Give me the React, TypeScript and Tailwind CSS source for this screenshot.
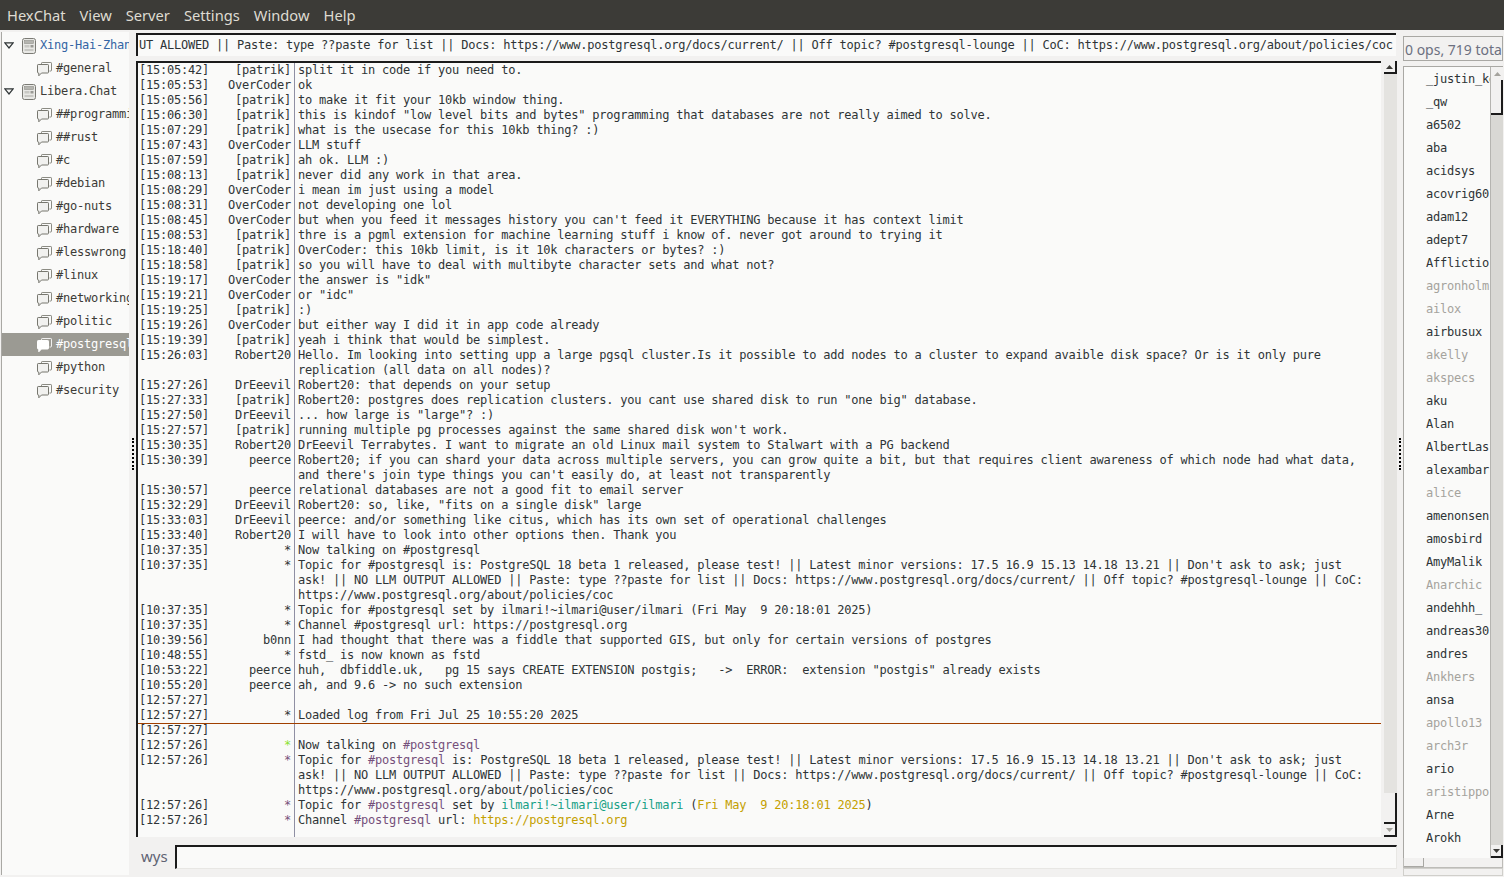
const mono = "font-['DejaVu_Sans_Mono',monospace]";

type Seg = string | [string, string];
type Line = { t: string; n: string; m: Seg[]; nc?: string };

const PURPLE = 'text-[#75507b]';
const TEAL = 'text-[#16a085]';
const GOLD = 'text-[#c4a000]';

const lines: Line[] = [
  { t: '15:05:42', n: '[patrik]', m: ['split it in code if you need to.'] },
  { t: '15:05:53', n: 'OverCoder', m: ['ok'] },
  { t: '15:05:56', n: '[patrik]', m: ['to make it fit your 10kb window thing.'] },
  { t: '15:06:30', n: '[patrik]', m: ['this is kindof "low level bits and bytes" programming that databases are not really aimed to solve.'] },
  { t: '15:07:29', n: '[patrik]', m: ['what is the usecase for this 10kb thing? :)'] },
  { t: '15:07:43', n: 'OverCoder', m: ['LLM stuff'] },
  { t: '15:07:59', n: '[patrik]', m: ['ah ok. LLM :)'] },
  { t: '15:08:13', n: '[patrik]', m: ['never did any work in that area.'] },
  { t: '15:08:29', n: 'OverCoder', m: ['i mean im just using a model'] },
  { t: '15:08:31', n: 'OverCoder', m: ['not developing one lol'] },
  { t: '15:08:45', n: 'OverCoder', m: ["but when you feed it messages history you can't feed it EVERYTHING because it has context limit"] },
  { t: '15:08:53', n: '[patrik]', m: ['thre is a pgml extension for machine learning stuff i know of. never got around to trying it'] },
  { t: '15:18:40', n: '[patrik]', m: ['OverCoder: this 10kb limit, is it 10k characters or bytes? :)'] },
  { t: '15:18:58', n: '[patrik]', m: ['so you will have to deal with multibyte character sets and what not?'] },
  { t: '15:19:17', n: 'OverCoder', m: ['the answer is "idk"'] },
  { t: '15:19:21', n: 'OverCoder', m: ['or "idc"'] },
  { t: '15:19:25', n: '[patrik]', m: [':)'] },
  { t: '15:19:26', n: 'OverCoder', m: ['but either way I did it in app code already'] },
  { t: '15:19:39', n: '[patrik]', m: ['yeah i think that would be simplest.'] },
  { t: '15:26:03', n: 'Robert20', m: ['Hello. Im looking into setting upp a large pgsql cluster.Is it possible to add nodes to a cluster to expand avaible disk space? Or is it only pure replication (all data on all nodes)?'] },
  { t: '15:27:26', n: 'DrEeevil', m: ['Robert20: that depends on your setup'] },
  { t: '15:27:33', n: '[patrik]', m: ['Robert20: postgres does replication clusters. you cant use shared disk to run "one big" database.'] },
  { t: '15:27:50', n: 'DrEeevil', m: ['... how large is "large"? :)'] },
  { t: '15:27:57', n: '[patrik]', m: ["running multiple pg processes against the same shared disk won't work."] },
  { t: '15:30:35', n: 'Robert20', m: ['DrEeevil Terrabytes. I want to migrate an old Linux mail system to Stalwart with a PG backend'] },
  { t: '15:30:39', n: 'peerce', m: ["Robert20; if you can shard your data across multiple servers, you can grow quite a bit, but that requires client awareness of which node had what data, and there's join type things you can't easily do, at least not transparently"] },
  { t: '15:30:57', n: 'peerce', m: ['relational databases are not a good fit to email server'] },
  { t: '15:32:29', n: 'DrEeevil', m: ['Robert20: so, like, "fits on a single disk" large'] },
  { t: '15:33:03', n: 'DrEeevil', m: ['peerce: and/or something like citus, which has its own set of operational challenges'] },
  { t: '15:33:40', n: 'Robert20', m: ['I will have to look into other options then. Thank you'] },
  { t: '10:37:35', n: '*', m: ['Now talking on #postgresql'] },
  { t: '10:37:35', n: '*', m: ["Topic for #postgresql is: PostgreSQL 18 beta 1 released, please test! || Latest minor versions: 17.5 16.9 15.13 14.18 13.21 || Don't ask to ask; just ask! || NO LLM OUTPUT ALLOWED || Paste: type ??paste for list || Docs: https://www.postgresql.org/docs/current/ || Off topic? #postgresql-lounge || CoC: https://www.postgresql.org/about/policies/coc"] },
  { t: '10:37:35', n: '*', m: ['Topic for #postgresql set by ilmari!~ilmari@user/ilmari (Fri May  9 20:18:01 2025)'] },
  { t: '10:37:35', n: '*', m: ['Channel #postgresql url: https://postgresql.org'] },
  { t: '10:39:56', n: 'b0nn', m: ['I had thought that there was a fiddle that supported GIS, but only for certain versions of postgres'] },
  { t: '10:48:55', n: '*', m: ['fstd_ is now known as fstd'] },
  { t: '10:53:22', n: 'peerce', m: ['huh,  dbfiddle.uk,   pg 15 says CREATE EXTENSION postgis;   ->  ERROR:  extension "postgis" already exists'] },
  { t: '10:55:20', n: 'peerce', m: ['ah, and 9.6 -> no such extension'] },
  { t: '12:57:27', n: '', m: [''] },
  { t: '12:57:27', n: '*', m: ['Loaded log from Fri Jul 25 10:55:20 2025'] },
];

const after: Line[] = [
  { t: '12:57:27', n: '', m: [''] },
  { t: '12:57:26', n: '*', nc: 'text-[#8ae234]', m: ['Now talking on ', [PURPLE, '#postgresql']] },
  { t: '12:57:26', n: '*', nc: 'text-[#75507b]', m: ['Topic for ', [PURPLE, '#postgresql'], " is: PostgreSQL 18 beta 1 released, please test! || Latest minor versions: 17.5 16.9 15.13 14.18 13.21 || Don't ask to ask; just ask! || NO LLM OUTPUT ALLOWED || Paste: type ??paste for list || Docs: https://www.postgresql.org/docs/current/ || Off topic? #postgresql-lounge || CoC: https://www.postgresql.org/about/policies/coc"] },
  { t: '12:57:26', n: '*', nc: 'text-[#75507b]', m: ['Topic for ', [PURPLE, '#postgresql'], ' set by ', [TEAL, 'ilmari!~ilmari@user/ilmari'], ' (', [GOLD, 'Fri May  9 20:18:01 2025'], ')'] },
  { t: '12:57:26', n: '*', nc: 'text-[#75507b]', m: ['Channel ', [PURPLE, '#postgresql'], ' url: ', [GOLD, 'https://postgresql.org']] },
];

const channels = ['##programming', '##rust', '#c', '#debian', '#go-nuts', '#hardware', '#lesswrong', '#linux', '#networking', '#politic'];

const nicks: [string, boolean][] = [
  ['_justin_kelly', false], ['_qw', false], ['a6502', false], ['aba', false], ['acidsys', false], ['acovrig60', false],
  ['adam12', false], ['adept7', false], ['Afflictio', false], ['agronholm', true], ['ailox', true], ['airbusux', false],
  ['akelly', true], ['akspecs', true], ['aku', false], ['Alan', false], ['AlbertLas', false], ['alexambar', false],
  ['alice', true], ['amenonsen', false], ['amosbird', false], ['AmyMalik', false], ['Anarchic', true], ['andehhh_', false],
  ['andreas30', false], ['andres', false], ['Ankhers', true], ['ansa', false], ['apollo13', true], ['arch3r', true],
  ['ario', false], ['aristippo', true], ['Arne', false], ['Arokh', false],
];

function ChatIcon({ light }: { light?: boolean }) {
  const stroke = light ? '#ffffff' : '#77776f';
  return (
    <svg width="16" height="16" viewBox="0 0 16 16" fill="none" className="shrink-0">
      <path d="M5.5 3V2.2Q5.5 1.5 6.2 1.5H14.8Q15.5 1.5 15.5 2.2V9.3Q15.5 10 14.8 10H13.5" stroke={stroke} opacity="0.85" />
      <path d="M2.2 3.5H11.8Q12.5 3.5 12.5 4.2V11.3Q12.5 12 11.8 12H5.5L2.8 14.8V12H2.2Q1.5 12 1.5 11.3V4.2Q1.5 3.5 2.2 3.5Z" stroke={stroke} fill={light ? '#ffffff' : '#f1f1ef'} />
    </svg>
  );
}

function ServerIcon() {
  return (
    <svg width="16" height="16" viewBox="0 0 16 16" fill="none" className="shrink-0">
      <rect x="1.5" y="0.5" width="13" height="15" rx="2" fill="#e8e8e5" stroke="#7b7b75" />
      <rect x="3.5" y="2.5" width="9" height="3" fill="#b5b5b0" stroke="#8f8f8a" strokeWidth="0.6" />
      <rect x="3.5" y="7" width="5" height="2.5" fill="#c8c8c4" />
      <rect x="9.5" y="7" width="3" height="2.5" fill="#9a9a95" />
      <rect x="3.5" y="11" width="9" height="2" fill="#c8c8c4" />
    </svg>
  );
}

function Expander() {
  return (
    <svg width="10" height="7" viewBox="0 0 10 7" className="shrink-0">
      <path d="M0.8 0.8H9.2L5 6Z" fill="#f4f4f2" stroke="#2e3436" strokeWidth="1.2" />
    </svg>
  );
}

function Arrow({ down, light }: { down?: boolean; light?: boolean }) {
  return (
    <svg width="7" height="4" viewBox="0 0 7 4">
      <path d={down ? 'M0 0H7L3.5 4Z' : 'M0 4H7L3.5 0Z'} fill={light ? '#a5a39d' : '#3c3b37'} />
    </svg>
  );
}

function Grip({ width }: { width: string }) {
  return (
    <div className={`flex shrink-0 items-center justify-center ${width}`}>
      <div className="h-[32px] border-l-2 border-dotted border-black" />
    </div>
  );
}

function ServerRow({ name, blue }: { name: string; blue?: boolean }) {
  return (
    <div className="flex h-[23px] items-center pl-[2px]">
      <Expander />
      <div className="ml-[7px] mr-[3px]">
        <ServerIcon />
      </div>
      <span className={`whitespace-pre ${blue ? 'text-[#3465a4]' : 'text-[#3c3b37]'}`}>{name}</span>
    </div>
  );
}

function ChannelRow({ name, selected }: { name: string; selected?: boolean }) {
  return (
    <div className={`flex h-[23px] items-center pl-[34px] ${selected ? 'bg-[#9b9a93] text-white' : 'text-[#3c3b37]'}`}>
      <ChatIcon light={selected} />
      <span className="ml-[4px] whitespace-pre">{name}</span>
    </div>
  );
}

function MessageRow({ line }: { line: Line }) {
  return (
    <div className="flex min-h-[15px]">
      <div className="flex w-[153px] shrink-0 whitespace-pre text-[#2e3436]">
        <span className="pl-[1px]">[{line.t}]</span>
        <span className={`ml-auto ${line.nc ?? ''}`}>{line.n}</span>
      </div>
      <div className="ml-[7px] min-w-0 flex-1 whitespace-pre-wrap break-words pr-[11px] text-[#2e3436]">
        {line.m.map((s, i) =>
          typeof s === 'string' ? <span key={i}>{s}</span> : <span key={i} className={s[0]}>{s[1]}</span>
        )}
      </div>
    </div>
  );
}

export default function App() {
  return (
    <div className={`flex h-[877px] w-[1504px] flex-col overflow-hidden bg-[#f2f1f0] ${mono} text-[12px] leading-[15px] tracking-[-0.22px]`}>
      {/* Menu bar */}
      <div className="flex h-[30px] shrink-0 items-center gap-[14px] bg-[#3c3b37] pl-[7px] font-['Noto_Sans',sans-serif] text-[14.7px] tracking-normal text-[#dfdbd2]">
        <span>HexChat</span>
        <span>View</span>
        <span>Server</span>
        <span>Settings</span>
        <span>Window</span>
        <span>Help</span>
      </div>

      <div className="flex min-h-0 flex-1">
        {/* Channel tree */}
        <div className="mb-[2px] ml-[1px] mt-[2px] w-[128px] shrink-0 overflow-hidden border-l border-[#a9a8a4] bg-[#fafaf9] pt-[2px]">
          <ServerRow name="Xing-Hai-Zhang" blue />
          <ChannelRow name="#general" />
          <ServerRow name="Libera.Chat" />
          {channels.map((c) => (
            <ChannelRow key={c} name={c} />
          ))}
          <ChannelRow name="#postgresql" selected />
          <ChannelRow name="#python" />
          <ChannelRow name="#security" />
        </div>

        <Grip width="w-[7px]" />

        {/* Centre column */}
        <div className="flex w-[1261px] shrink-0 flex-col pt-[3px]">
          <div className="flex h-[23px] w-[1260px] shrink-0 items-center overflow-hidden whitespace-pre border-l-2 border-t-2 border-[#1b1b1b] bg-[#fafaf9] pl-[1px] text-[#2e3436]">
            UT ALLOWED || Paste: type ??paste for list || Docs: https://www.postgresql.org/docs/current/ || Off topic? #postgresql-lounge || CoC: https://www.postgresql.org/about/policies/coc
          </div>

          <div className="mt-[5px] flex h-[776px] shrink-0">
            <div className="relative w-[1245px] overflow-hidden border-l-2 border-t-2 border-[#1b1b1b] bg-[#fafaf9]">
              <div className="absolute bottom-0 left-[156px] top-0 w-px bg-[#8f8fa3]" />
              <div className="relative">
                {lines.map((l, i) => (
                  <MessageRow key={i} line={l} />
                ))}
                <div className="-mb-px h-px bg-[#a04000]" />
                {after.map((l, i) => (
                  <MessageRow key={i} line={l} />
                ))}
              </div>
            </div>

            {/* Scrollbar */}
            <div className="ml-[3px] flex w-[13px] flex-col bg-[#e4e3e0]">
              <div className="flex h-[13px] items-center justify-center border-b-2 border-r-2 border-[#1b1b1b] bg-[#f2f1f0]">
                <Arrow />
              </div>
              <div className="flex-1" />
              <div className="h-[31px] border-b-2 border-r-2 border-[#1b1b1b] bg-[#f2f1f0]" />
              <div className="flex h-[13px] items-center justify-center border-b-2 border-r-2 border-[#1b1b1b] bg-[#f2f1f0]">
                <Arrow down light />
              </div>
            </div>
          </div>

          {/* Input row */}
          <div className="mt-[8px] flex h-[24px] shrink-0 items-center pl-[5px]">
            <span className="w-[34px] -translate-y-px font-['Noto_Sans',sans-serif] text-[15px] tracking-normal text-[#5f6373]">wys</span>
            <div className="h-full flex-1 border-b border-l-2 border-r border-t-2 border-b-[#e8e7e4] border-l-[#1b1b1b] border-r-[#e8e7e4] border-t-[#1b1b1b] bg-[#fafaf9]" />
          </div>
        </div>

        <Grip width="w-[6px]" />

        {/* Nick column */}
        <div className="mr-[1px] flex w-[100px] shrink-0 flex-col pt-[6px]">
          <div className="flex h-[25px] shrink-0 items-center overflow-hidden whitespace-pre border border-[#a9a8a4] bg-[#f2f1f0] pl-[1px] pt-[2px] font-['Noto_Sans',sans-serif] text-[14px] tracking-normal text-[#6c7080]">
            0 ops, 719 total
          </div>

          <div className="mt-[5px] flex h-[792px] shrink-0 overflow-hidden border-l border-t border-[#a9a8a4] bg-[#fafaf9]">
            <div className="min-w-0 flex-1 overflow-hidden pl-[22px] pt-[1px]">
              {nicks.map(([name, away]) => (
                <div key={name} className={`flex h-[23px] items-center whitespace-pre ${away ? 'text-[#a5a39d]' : 'text-[#2e3436]'}`}>
                  {name}
                </div>
              ))}
            </div>
            <div className="flex w-[13px] shrink-0 flex-col border-l border-[#b5b4b0] bg-[#d9d8d4]">
              <div className="flex h-[13px] items-center justify-center bg-[#f2f1f0]">
                <Arrow light />
              </div>
              <div className="h-[35px] border-b-2 border-r-2 border-[#1b1b1b] bg-[#f2f1f0]" />
              <div className="flex-1" />
              <div className="flex h-[13px] items-center justify-center border-b-2 border-r-2 border-[#1b1b1b] bg-[#f2f1f0]">
                <Arrow down />
              </div>
            </div>
          </div>

          <div className="h-[10px] shrink-0 border border-t-0 border-[#bdbcb8]">
            <div className="h-full w-[20px] border-b border-r border-[#a9a8a4]" />
          </div>
          <div className="h-[8px] shrink-0 border border-[#d0cfcb]" />
        </div>
      </div>
    </div>
  );
}
